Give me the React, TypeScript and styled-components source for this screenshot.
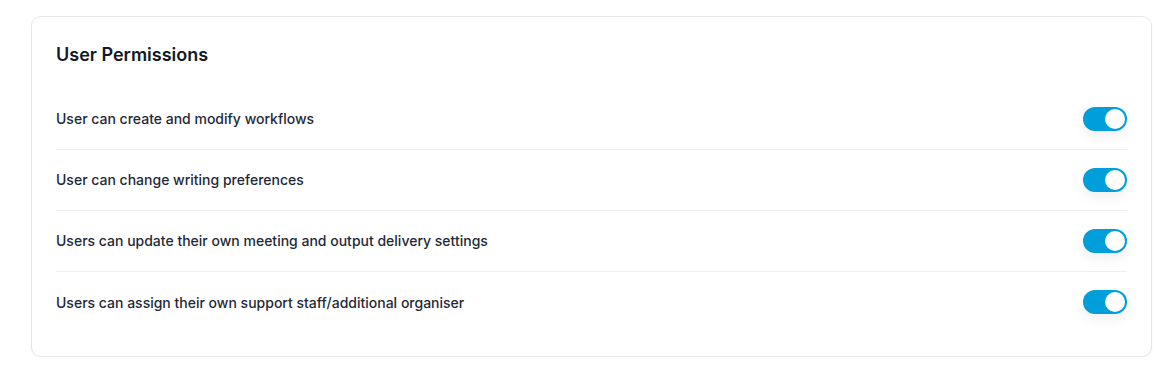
import React, { useState } from "react";
import styled, { createGlobalStyle } from "styled-components";

const GlobalStyle = createGlobalStyle`
  html, body { margin: 0; padding: 0; background: #ffffff; }
  body { font-family: Inter, "Noto Sans", sans-serif; -webkit-font-smoothing: antialiased; }
  * { box-sizing: border-box; }
`;

const Page = styled.div`
  padding: 16px 19px 0 31px;
`;

const Card = styled.section`
  background: #ffffff;
  border: 1px solid #e5e7eb;
  border-radius: 10px;
  padding: 24px;
  box-shadow: 0 1px 2px rgba(16, 24, 40, 0.04);
`;

const Title = styled.h2`
  margin: 0 0 20px 0;
  font-size: 18px;
  line-height: 28px;
  font-weight: 600;
  color: #111827;
`;

const List = styled.div`
  display: flex;
  flex-direction: column;
`;

const Row = styled.div`
  display: flex;
  align-items: center;
  justify-content: space-between;
  height: 61px;
  padding-bottom: 1px;
  border-bottom: 1px solid #eceef1;
  &:last-child {
    border-bottom: none;
    height: 60px;
    padding-bottom: 0;
  }
`;

const Label = styled.span`
  font-size: 14px;
  font-weight: 500;
  color: #1f2937;
`;

const Track = styled.button<{ $on: boolean }>`
  position: relative;
  width: 44px;
  height: 24px;
  border: none;
  padding: 0;
  border-radius: 12px;
  background: ${(p) => (p.$on ? "#009fdb" : "#d1d5db")};
  cursor: pointer;
  flex-shrink: 0;
  box-shadow: 0 6px 12px rgba(0, 0, 0, 0.06);
`;

const Knob = styled.span<{ $on: boolean }>`
  position: absolute;
  top: 2px;
  left: ${(p) => (p.$on ? "22px" : "2px")};
  width: 20px;
  height: 20px;
  border-radius: 50%;
  background: #ffffff;
  transition: left 0.15s;
`;

const items = [
  "User can create and modify workflows",
  "User can change writing preferences",
  "Users can update their own meeting and output delivery settings",
  "Users can assign their own support staff/additional organiser",
];

export default function App() {
  const [state, setState] = useState<boolean[]>([true, true, true, true]);
  return (
    <Page>
      <GlobalStyle />
      <Card>
        <Title>User Permissions</Title>
        <List>
          {items.map((t, i) => (
            <Row key={t}>
              <Label>{t}</Label>
              <Track
                $on={state[i]}
                aria-pressed={state[i]}
                onClick={() => setState((s) => s.map((v, j) => (j === i ? !v : v)))}
              >
                <Knob $on={state[i]} />
              </Track>
            </Row>
          ))}
        </List>
      </Card>
    </Page>
  );
}
